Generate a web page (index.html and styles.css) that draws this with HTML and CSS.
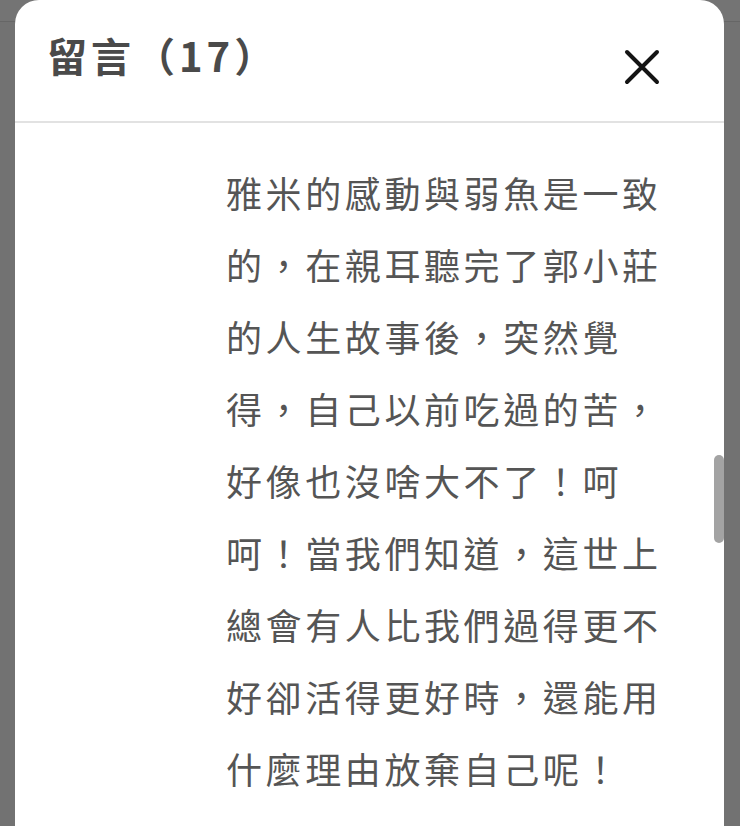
FILE: index.html
```html
<!DOCTYPE html>
<html lang="zh-Hant">
<head>
<meta charset="utf-8">
<title>留言</title>
<link rel="stylesheet" href="styles.css">
</head>
<body>
<div class="backdrop">
  <section class="modal">
    <header class="modal-header">
      <h2 class="modal-title">留言（17）</h2>
      <button class="close-btn" aria-label="關閉">
        <svg width="36" height="36" viewBox="0 0 36 36"><path d="M3 3 L33 33 M33 3 L3 33" stroke="#141414" stroke-width="4" stroke-linecap="round" fill="none"/></svg>
      </button>
    </header>
    <div class="modal-body">
      <p class="comment-text">雅米的感動與弱魚是一致的，在親耳聽完了郭小莊的人生故事後，突然覺得，自己以前吃過的苦，好像也沒啥大不了！呵呵！當我們知道，這世上總會有人比我們過得更不好卻活得更好時，還能用什麼理由放棄自己呢！</p>
      <div class="scrollbar"></div>
    </div>
  </section>
</div>
</body>
</html>
```
FILE: styles.css
```css
* { box-sizing: border-box; }
html, body {
  margin: 0;
  padding: 0;
  height: 100%;
}
body {
  background: #727272;
  font-family: "Noto Sans CJK TC", "Noto Sans", sans-serif;
  overflow: hidden;
}
.backdrop {
  height: 826px;
  padding: 0 16px 0 15px;
  background: linear-gradient(to bottom, #747474 0, #747474 21px, #666 21px, #666 22px, #727272 22px);
}
.modal {
  background: #fff;
  height: 826px;
  border-radius: 24px 24px 0 0;
  display: flex;
  flex-direction: column;
}
.modal-header {
  height: 123px;
  border-bottom: 2px solid #e2e2e2;
  display: flex;
  align-items: center;
  justify-content: space-between;
  padding: 0 64px 0 32px;
}
.modal-title {
  margin: 0 0 12px 0;
  font-size: 40px;
  font-weight: 700;
  letter-spacing: 4px;
  color: #4a4a4a;
  line-height: 1;
}
.close-btn {
  border: 0;
  background: none;
  padding: 0;
  width: 36px;
  height: 36px;
  margin-top: 12px;
  display: block;
}
.close-btn svg { display: block; }
.modal-body {
  position: relative;
  flex: 1;
  padding: 33px 0 0 211px;
}
.comment-text {
  margin: 0;
  width: 440px;
  font-size: 36px;
  line-height: 72px;
  letter-spacing: 3.6px;
  color: #555;
}
.scrollbar {
  position: absolute;
  right: 0;
  top: 332px;
  width: 10px;
  height: 88px;
  border-radius: 5px;
  background: #a3a3a3;
}
```
